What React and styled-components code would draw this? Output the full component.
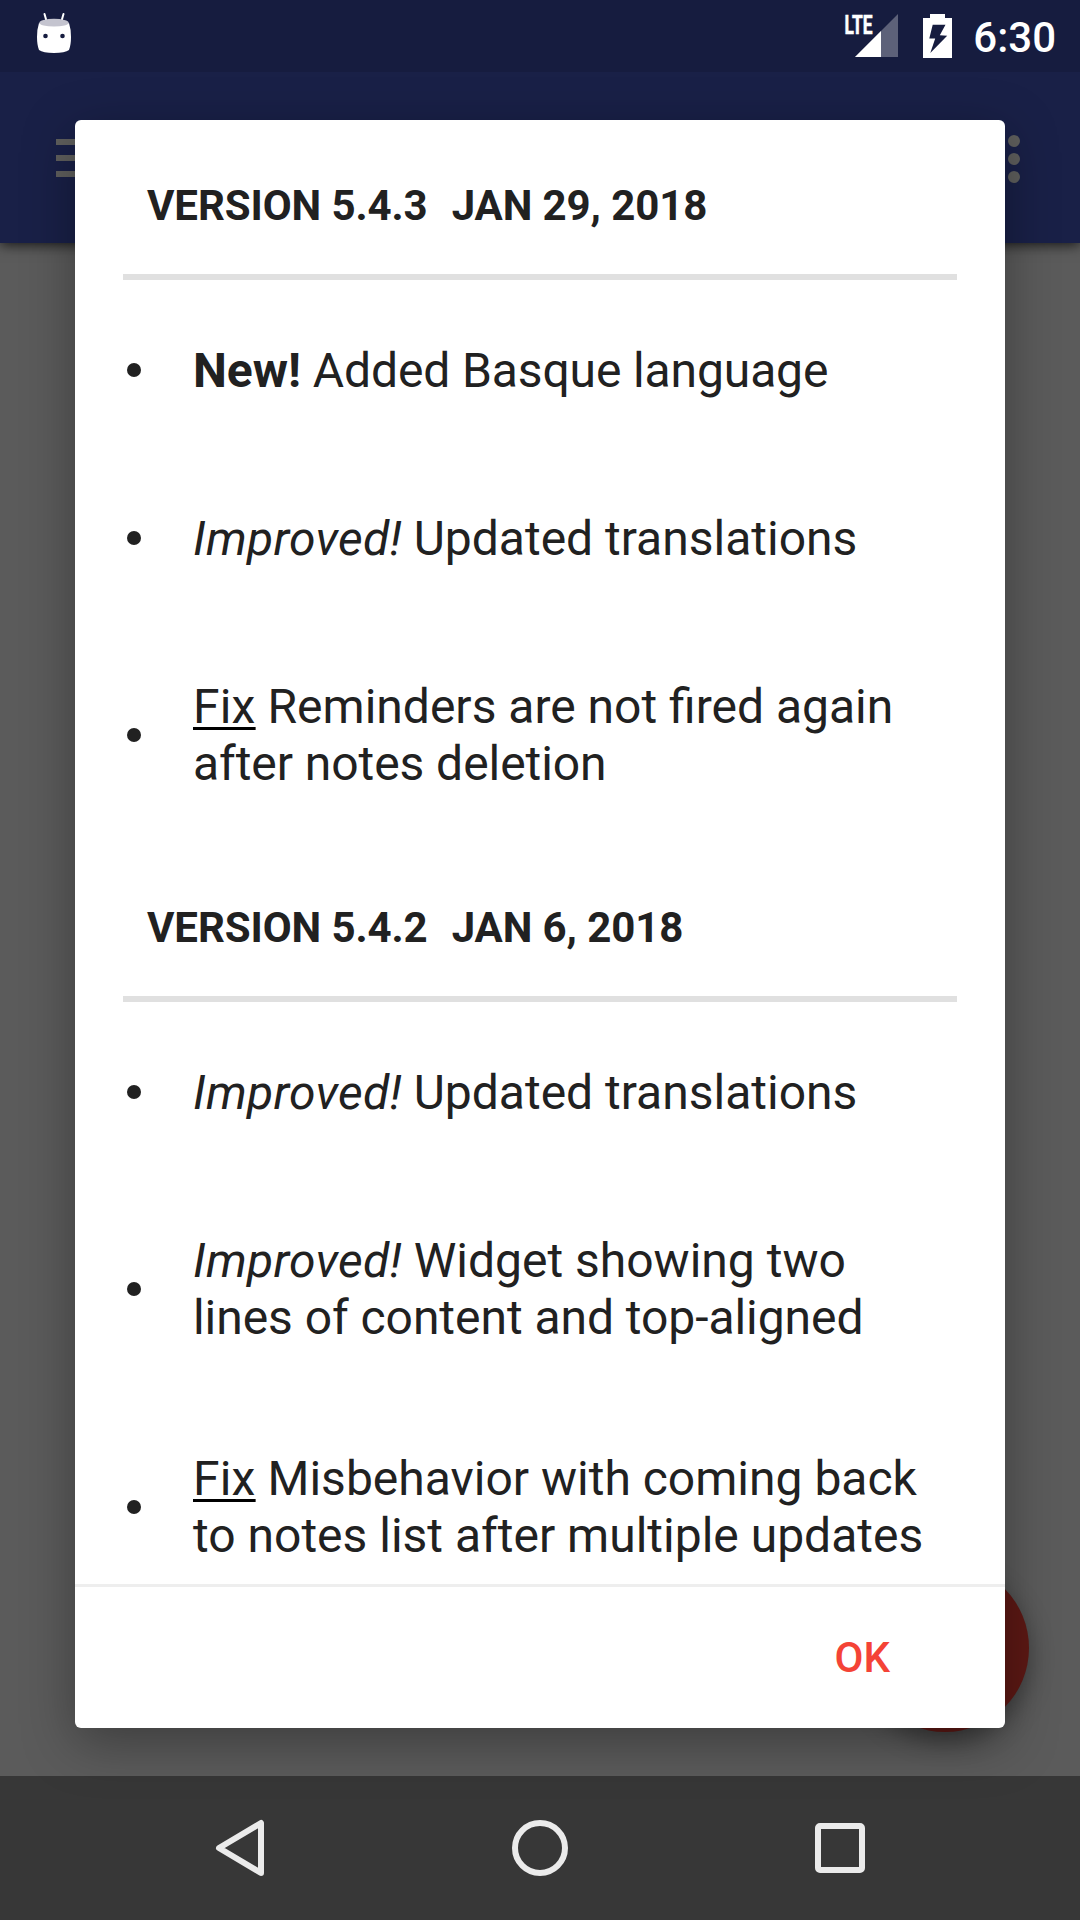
import React from "react";
import styled, { createGlobalStyle } from "styled-components";

const Global = createGlobalStyle`
  *{box-sizing:border-box}
  body{margin:0;font-family:Roboto,"Liberation Sans",sans-serif;color:#212121}
`;
const Screen = styled.div`
  position:relative;width:1080px;height:1920px;overflow:hidden;
  display:flex;flex-direction:column;background:#5b5b5b;
`;
const StatusBar = styled.header`
  height:72px;flex:none;display:flex;align-items:flex-start;background:#161c3f;
  position:relative;z-index:3;
`;
const StatusIcons = styled.div`
  margin-left:auto;display:flex;padding-right:24px;
`;
const Clock = styled.span`
  color:#fff;font-size:42px;font-weight:500;line-height:50px;padding-top:13px;margin-left:21px;
`;
const AppBar = styled.div`
  height:171px;flex:none;display:flex;justify-content:space-between;align-items:flex-start;
  padding:63px 60px 0 56px;background:#192047;box-shadow:0 2px 12px rgba(0,0,0,.75);
`;
const MenuIcon = styled.svg`display:block;margin-top:4px;`;
const Content = styled.main`flex:1;`;
const Fab = styled.div`
  position:absolute;left:861px;top:1564px;width:168px;height:168px;border-radius:50%;
  background:#5c1814;box-shadow:0 9px 24px rgba(0,0,0,.36);
`;
const NavBar = styled.nav`
  height:144px;flex:none;display:flex;align-items:center;justify-content:space-between;
  padding:0 210px;background:#373737;position:relative;
`;
const Dialog = styled.section`
  position:absolute;z-index:2;left:75px;top:120px;width:930px;height:1608px;
  display:flex;flex-direction:column;background:#fff;border-radius:6px;
  box-shadow:0 14px 52px rgba(0,0,0,.34);overflow:hidden;
`;
const Log = styled.div`
  height:1464px;flex:none;overflow:hidden;padding:0 48px;
`;
const Release = styled.h2`
  margin:0;height:160px;padding:61px 24px 0;border-bottom:6px solid #e0e0e0;
  font-size:42px;font-weight:700;line-height:50px;letter-spacing:-.09px;display:flex;gap:24px;
`;
const List = styled.ul`margin:0;padding:6px 0 0;list-style:none;height:562px;`;
const Row = styled.li`
  display:flex;align-items:center;height:${p => (p.$tall ? 218 : 168)}px;
  margin-top:${p => p.$gap || 0}px;
  font-size:48px;line-height:57px;
`;
const Bullet = styled.span`
  width:14px;height:14px;border-radius:50%;background:#212121;margin:0 52px 0 4px;flex:none;
`;
const Text = styled.p`
  margin:0;white-space:nowrap;letter-spacing:${p => p.$track || 0}px;
`;
const New = styled.b`letter-spacing:0;`;
const Improved = styled.i`letter-spacing:.27px;`;
const Line = styled.span`display:block;letter-spacing:${p => p.$track || 0}px;`;
const Fix = styled.span`
  letter-spacing:.2px;
  text-decoration:underline;text-decoration-color:#000;text-decoration-thickness:3px;
  text-underline-offset:4px;text-decoration-skip-ink:none;
`;
const Actions = styled.footer`
  flex:1;border-top:3px solid #eee;display:flex;justify-content:flex-end;align-items:center;padding-right:115px;
`;
const OkButton = styled.button`
  border:0;background:none;padding:0;color:#f44336;font:500 42px/50px Roboto,"Liberation Sans",sans-serif;
`;

export default function App() {
  return (
    <Screen>
      <Global />
      <StatusBar>
        <svg width="80" height="72">
          <path d="M44.5 14 46.5 21M63.5 14 61.5 21" stroke="#fff" strokeWidth="2" strokeLinecap="round" />
          <path d="M39 23Q54 28 69 23Q71 29 71 37Q71 45 69 50Q65 53 54 53Q43 53 39 50Q37 45 37 37Q37 29 39 23Z" fill="#fff" />
          <ellipse cx="54" cy="22.7" rx="14.7" ry="3.9" fill="#c4c4cf" />
          <circle cx="45.5" cy="36" r="2.3" fill="#161c3f" /><circle cx="62.5" cy="36" r="2.3" fill="#161c3f" />
        </svg>
        <StatusIcons>
          <svg width="110" height="72" fontFamily="Roboto, sans-serif">
            <path d="M55 57 98 14V57Z" fill="#5d6179" />
            <path d="M55 57 81 31V57Z" fill="#fff" />
            <text x="44.500" y="33.5" fontSize="26" fontWeight="700" fill="#fff" stroke="#fff" strokeWidth=".6" textLength="28" lengthAdjust="spacingAndGlyphs">LTE</text>
          </svg>
          <svg width="42" height="72">
            <path d="M20 14H35V18H42V58H13V18H20Z" fill="#fff" />
            <path d="M22.700 24.700H35.500L29.800 35.300 37.200 35.700 20.300 53 25.200 38.500H19.300Z" fill="#161c3f" />
          </svg>
          <Clock>6:30</Clock>
        </StatusIcons>
      </StatusBar>
      <AppBar>
        <MenuIcon width="54" height="38"><path d="M0 3H54M0 19H54M0 35H54" stroke="#5f5f5d" strokeWidth="6" /></MenuIcon>
        <svg width="12" height="48" fill="#5f5f5d"><circle cx="6" cy="6" r="6" /><circle cx="6" cy="24" r="6" /><circle cx="6" cy="42" r="6" /></svg>
      </AppBar>
      <Content />
      <Fab />
      <NavBar>
        <svg width="60" height="60"><path d="M51 5V55L9 30Z" fill="none" stroke="#ebebeb" strokeWidth="6" strokeLinejoin="round" /></svg>
        <svg width="60" height="60"><circle cx="30" cy="30" r="25" fill="none" stroke="#ebebeb" strokeWidth="6" /></svg>
        <svg width="60" height="60"><rect x="8" y="8" width="44" height="44" rx="2" fill="none" stroke="#ebebeb" strokeWidth="6" /></svg>
      </NavBar>
      <Dialog>
        <Log>
          <Release><span>VERSION 5.4.3</span><span>JAN 29, 2018</span></Release>
          <List>
            <Row><Bullet /><Text $track={-0.12}><New>New!</New> Added Basque language</Text></Row>
            <Row><Bullet /><Text><Improved>Improved!</Improved> Updated translations</Text></Row>
            <Row $tall $gap={4}><Bullet /><Text><Line><Fix>Fix</Fix> Reminders are not fired again</Line><Line $track={-0.06}>after notes deletion</Line></Text></Row>
          </List>
          <Release><span>VERSION 5.4.2</span><span>JAN 6, 2018</span></Release>
          <List>
            <Row><Bullet /><Text><Improved>Improved!</Improved> Updated translations</Text></Row>
            <Row $tall $gap={4}><Bullet /><Text><Line><Improved>Improved!</Improved> Widget showing two</Line><Line $track={-0.05}>lines of content and top-aligned</Line></Text></Row>
            <Row $tall><Bullet /><Text><Line><Fix>Fix</Fix> Misbehavior with coming back</Line><Line>to notes list after multiple updates</Line></Text></Row>
          </List>
        </Log>
        <Actions><OkButton>OK</OkButton></Actions>
      </Dialog>
    </Screen>
  );
}
